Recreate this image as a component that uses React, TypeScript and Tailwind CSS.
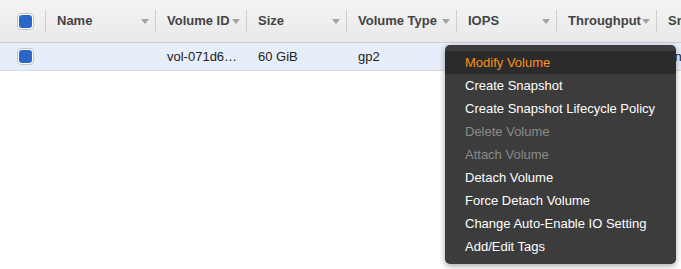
import React from 'react';

const columns = [
  { label: 'Name', width: 'w-[110px]' },
  { label: 'Volume ID', width: 'w-[91px]' },
  { label: 'Size', width: 'w-[100px]' },
  { label: 'Volume Type', width: 'w-[110px]' },
  { label: 'IOPS', width: 'w-[100px]' },
  { label: 'Throughput', width: 'w-[100px]' },
  { label: 'Snapshot', width: 'w-[100px]' },
];

const row = ['', 'vol-071d6…', '60 GiB', 'gp2', '', '', 'snap-0a1'];

const menuItems = [
  { label: 'Modify Volume', active: true },
  { label: 'Create Snapshot' },
  { label: 'Create Snapshot Lifecycle Policy' },
  { label: 'Delete Volume', disabled: true },
  { label: 'Attach Volume', disabled: true },
  { label: 'Detach Volume' },
  { label: 'Force Detach Volume' },
  { label: 'Change Auto-Enable IO Setting' },
  { label: 'Add/Edit Tags' },
];

function Checkbox() {
  return (
    <div className="w-[17px] h-[17px] rounded-[4px] border border-[#c4c4c4] bg-white flex items-center justify-center">
      <div className="w-[13px] h-[13px] rounded-[3px] bg-[#2a67c9]" />
    </div>
  );
}

function Caret() {
  return (
    <svg width="8" height="5" viewBox="0 0 8 5" className="shrink-0">
      <path d="M0 0h8L4 5z" fill="#a3a3a3" />
    </svg>
  );
}

export default function App() {
  return (
    <div className="relative w-[681px] h-[269px] bg-white overflow-hidden font-['Liberation_Sans',Arial,sans-serif] text-[13px]">
      <div className="flex h-[43px] bg-gradient-to-b from-[#f4f4f4] to-[#e9e9e9] border-b border-[#cfcfcf]">
        <div className="w-[45px] shrink-0 flex items-center pl-[17px]">
          <Checkbox />
        </div>
        {columns.map((c) => (
          <div key={c.label} className={`${c.width} shrink-0 flex items-center`}>
            <div className="w-px h-[22px] bg-[#cdcdcd]" />
            <div className="flex-1 flex items-center justify-between pl-[11px] pr-[6px] overflow-hidden">
              <span className="font-bold text-[#444] whitespace-nowrap">{c.label}</span>
              <Caret />
            </div>
          </div>
        ))}
      </div>
      <div className="flex h-[28px] bg-[#e6eefa] border-b border-[#d9dde3]">
        <div className="w-[45px] shrink-0 flex items-center pl-[17px]">
          <Checkbox />
        </div>
        {columns.map((c, i) => (
          <div key={c.label} className={`${c.width} shrink-0 flex items-center pl-[12px] text-[#222] whitespace-nowrap`}>
            {row[i]}
          </div>
        ))}
      </div>

      <div className="absolute left-[445px] top-[45px] w-[231px] rounded-[5px] bg-[#3c3c3c] pt-[6px] pb-[6px] shadow-[0_2px_6px_rgba(0,0,0,0.35)]">
        {menuItems.map((m) => (
          <div
            key={m.label}
            className={`h-[23px] flex items-center pl-[20px] whitespace-nowrap ${
              m.active ? 'bg-[#2b2b2b] text-[#f7931e]' : m.disabled ? 'text-[#8a8a8a]' : 'text-white'
            }`}
          >
            {m.label}
          </div>
        ))}
      </div>
    </div>
  );
}
